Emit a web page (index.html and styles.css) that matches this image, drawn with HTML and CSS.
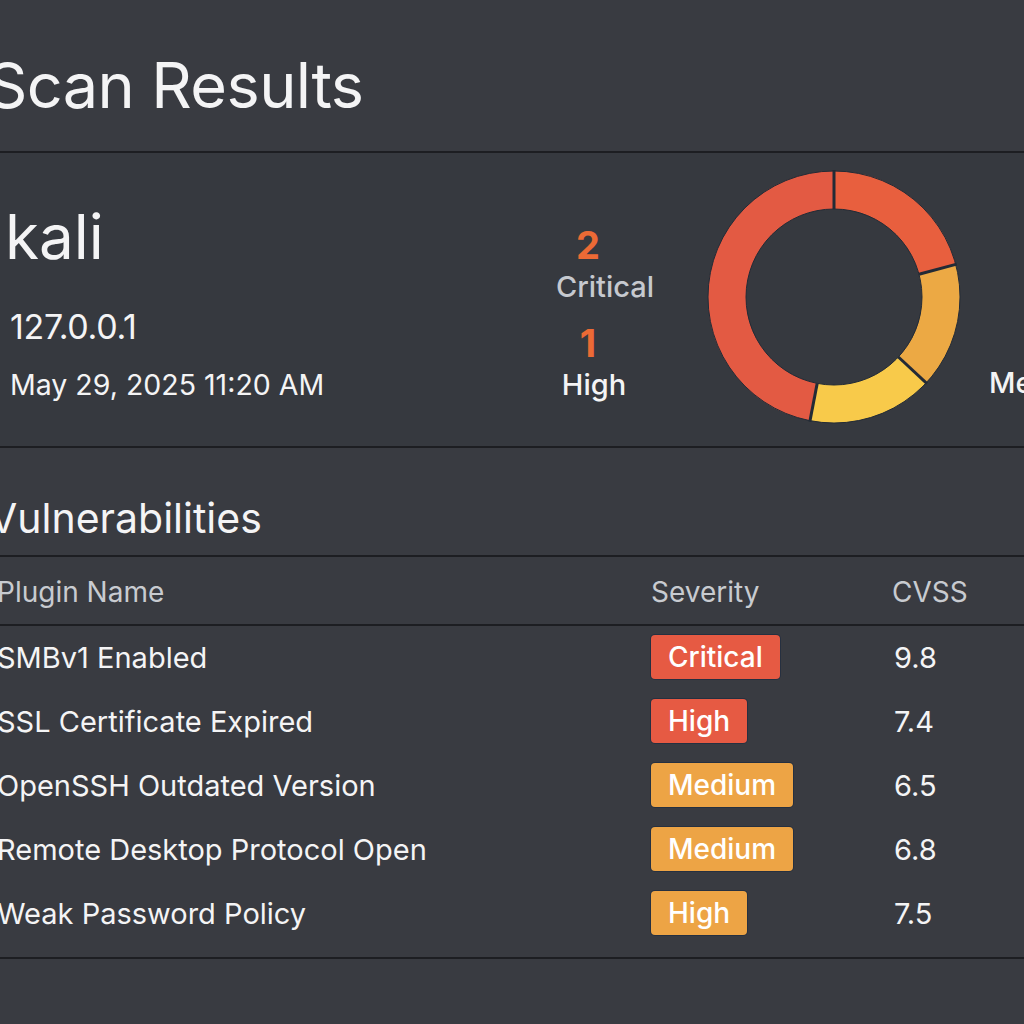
FILE: index.html
```html
<!DOCTYPE html>
<html lang="en">
<head>
<meta charset="utf-8">
<title>Scan Results</title>
<link rel="stylesheet" href="styles.css">
</head>
<body>
<div class="page">
  <header class="page-head">
    <h1 class="title">Scan Results</h1>
  </header>

  <section class="summary">
    <div class="host">
      <div class="host-name">kali</div>
      <div class="host-ip">127.0.0.1</div>
      <div class="host-date">May 29, 2025 11:20 AM</div>
    </div>
    <div class="counts">
      <div class="count-num">2</div>
      <div class="count-label muted">Critical</div>
      <div class="count-num">1</div>
      <div class="count-label high">High</div>
    </div>
    <div class="chart">
      <svg class="donut" width="256" height="256" viewBox="0 0 256 256">
        <g transform="rotate(-90 128 128)" fill="none" stroke-width="38">
          <circle cx="128" cy="128" r="107" stroke="#e85f3e" stroke-dasharray="140.1 532.2" stroke-dashoffset="0"/>
          <circle cx="128" cy="128" r="107" stroke="#eca944" stroke-dasharray="108.3 564" stroke-dashoffset="-140.1"/>
          <circle cx="128" cy="128" r="107" stroke="#f8ca4a" stroke-dasharray="108.3 564" stroke-dashoffset="-248.4"/>
          <circle cx="128" cy="128" r="107" stroke="#e35a43" stroke-dasharray="315.6 356.7" stroke-dashoffset="-356.7"/>
        </g>
        <circle cx="128" cy="128" r="126" fill="none" stroke="#232b36" stroke-width="1"/>
        <circle cx="128" cy="128" r="88" fill="none" stroke="#232b36" stroke-width="1"/>
        <g stroke="#232b36" stroke-width="3">
          <line x1="128" y1="40" x2="128" y2="1"/>
          <line x1="213" y1="105.2" x2="250.7" y2="95.1"/>
          <line x1="192.4" y1="188" x2="221" y2="214.6"/>
          <line x1="111.2" y1="214.4" x2="103.8" y2="252.7"/>
        </g>
      </svg>
    </div>
    <div class="legend">Medium</div>
  </section>

  <section class="vulns">
    <h2 class="vulns-title">Vulnerabilities</h2>
    <div class="table">
      <div class="row head">
        <div class="c-name">Plugin Name</div>
        <div class="c-sev">Severity</div>
        <div class="c-cvss">CVSS</div>
      </div>
      <div class="body">
        <div class="row">
          <div class="c-name">SMBv1 Enabled</div>
          <div class="c-sev"><span class="badge red">Critical</span></div>
          <div class="c-cvss">9.8</div>
        </div>
        <div class="row">
          <div class="c-name">SSL Certificate Expired</div>
          <div class="c-sev"><span class="badge red">High</span></div>
          <div class="c-cvss">7.4</div>
        </div>
        <div class="row">
          <div class="c-name">OpenSSH Outdated Version</div>
          <div class="c-sev"><span class="badge orange">Medium</span></div>
          <div class="c-cvss">6.5</div>
        </div>
        <div class="row">
          <div class="c-name">Remote Desktop Protocol Open</div>
          <div class="c-sev"><span class="badge orange">Medium</span></div>
          <div class="c-cvss">6.8</div>
        </div>
        <div class="row">
          <div class="c-name">Weak Password Policy</div>
          <div class="c-sev"><span class="badge orange">High</span></div>
          <div class="c-cvss">7.5</div>
        </div>
      </div>
    </div>
  </section>
</div>
</body>
</html>
```
FILE: styles.css
```css
html, body {
  margin: 0;
  padding: 0;
  background: #393b41;
  height: 100%;
}
body {
  font-family: Inter, "Noto Sans", "Liberation Sans", sans-serif;
  color: #f4f4f5;
  overflow: hidden;
}
.page {
  width: 1100px;
  margin-left: -8px;
}
.page-head {
  height: 153px;
  border-bottom: 2px solid #1d1e22;
  box-sizing: border-box;
  display: flex;
  align-items: flex-start;
}
.title {
  margin: 0 0 0 -5px;
  padding-top: 47px;
  font-size: 63px;
  font-weight: 400;
  letter-spacing: -0.6px;
  line-height: 76px;
}
.summary {
  height: 295px;
  box-sizing: border-box;
  border-bottom: 2px solid #1d1e22;
  display: flex;
  align-items: flex-start;
  background: #36393f;
}
.summary > * {
  flex-shrink: 0;
}
.host {
  width: 565px;
  padding-left: 13px;
  padding-top: 46px;
  box-sizing: border-box;
}
.host-name {
  font-size: 62px;
  line-height: 76px;
  font-weight: 400;
}
.host-ip {
  font-size: 34px;
  line-height: 40px;
  margin-top: 32px;
  padding-left: 5px;
  letter-spacing: -0.3px;
}
.host-date {
  font-size: 28.5px;
  line-height: 40px;
  margin-top: 18px;
  padding-left: 5px;
}
.counts {
  width: 96px;
  padding-top: 70px;
  display: flex;
  flex-direction: column;
  align-items: center;
}
.count-num {
  color: #ec6a35;
  font-size: 38px;
  font-weight: 700;
  line-height: 44px;
  margin-right: 34px;
}
.count-label {
  font-size: 29px;
  line-height: 40px;
  font-weight: 500;
  margin-bottom: 14px;
}
.count-label.muted {
  color: #c6c9cf;
}
.count-label.high {
  margin-right: 22px;
}
.chart {
  margin-left: 53px;
  padding-top: 16px;
}
.donut {
  display: block;
}
.legend {
  margin-left: 27px;
  padding-top: 210px;
  font-size: 29px;
  line-height: 40px;
  font-weight: 500;
}
.vulns {
  border-bottom: 2px solid #1d1e22;
  padding-bottom: 11px;
}
.vulns-title {
  margin: 0 0 0 -3px;
  font-size: 41px;
  font-weight: 400;
  height: 109px;
  line-height: 50px;
  display: flex;
  align-items: flex-end;
  padding-bottom: 12px;
  box-sizing: border-box;
  border-bottom: 2px solid #1d1e22;
}
.row {
  display: flex;
  align-items: center;
  height: 64px;
  font-size: 29px;
}
.row.head {
  height: 69px;
  color: #c8cbd0;
  border-bottom: 2px solid #1d1e22;
  box-sizing: border-box;
  font-size: 28px;
  padding-top: 2px;
}
.body .row {
  padding-bottom: 2px;
  box-sizing: border-box;
}
.c-name {
  width: 659px;
  padding-left: 5px;
  box-sizing: border-box;
}
.c-sev {
  width: 241px;
}
.c-cvss {
  flex: 1;
}
.body .c-cvss {
  padding-left: 2px;
}
.badge {
  display: inline-block;
  padding: 0 17px;
  height: 44px;
  line-height: 44px;
  border-radius: 4px;
  font-weight: 500;
  font-size: 28px;
  color: #fff;
  box-shadow: 0 0 0 1px #263040;
}
.badge.red {
  background: #e65a43;
}
.badge.orange {
  background: #eda445;
}
```
